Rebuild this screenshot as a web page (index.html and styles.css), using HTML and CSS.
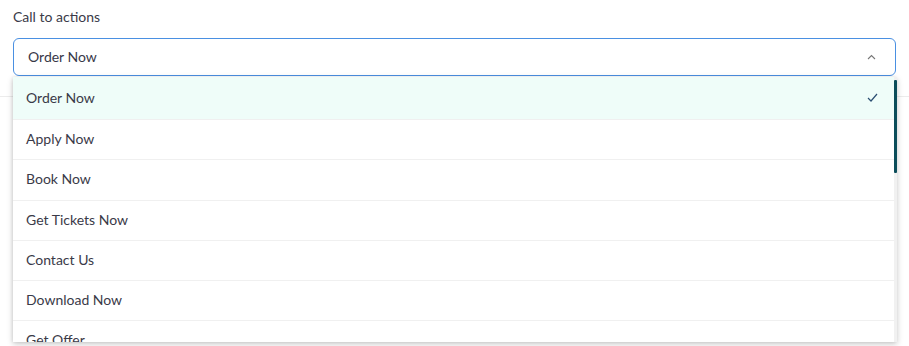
FILE: index.html
```html
<!DOCTYPE html>
<html>
<head>
<meta charset="utf-8">
<link rel="stylesheet" href="styles.css">
</head>
<body>
<div class="page">
  <div class="field">
    <div class="label">Call to actions</div>
    <div class="select">
      <span class="value">Order Now</span>
      <svg class="chev" width="9" height="6" viewBox="0 0 9 6"><path d="M1 5 L4.5 1.5 L8 5" fill="none" stroke="#777" stroke-width="1.1"/></svg>
    </div>
    <div class="menu">
      <div class="list">
        <div class="opt sel"><span>Order Now</span><svg class="check" width="11" height="9" viewBox="0 0 11 9"><path d="M1 5 L4 8 L10 1" fill="none" stroke="#2c4f73" stroke-width="1.2"/></svg></div>
        <div class="opt"><span>Apply Now</span></div>
        <div class="opt"><span>Book Now</span></div>
        <div class="opt"><span>Get Tickets Now</span></div>
        <div class="opt"><span>Contact Us</span></div>
        <div class="opt"><span>Download Now</span></div>
        <div class="opt"><span>Get Offer</span></div>
      </div>
      <div class="track"><div class="thumb"></div></div>
    </div>
  </div>
  <div class="divider"></div>
</div>
</body>
</html>
```
FILE: styles.css
```css
html, body { margin: 0; padding: 0; background: #fff; }
body {
  font-family: "Lato", "Noto Sans", sans-serif;
  color: #383848;
  width: 909px;
  height: 346px;
  overflow: hidden;
}
.page { padding: 8px 13px 0 13px; }
.field { position: relative; }
.label { font-size: 14px; line-height: 17px; height: 17px; margin-bottom: 13px; color: #3a3a48; }
.select {
  box-sizing: border-box;
  height: 38px;
  border: 1px solid #4a90e2;
  border-radius: 6px;
  display: flex;
  align-items: center;
  justify-content: space-between;
  padding: 0 19px 1px 14px;
  font-size: 14px;
}
.chev { display: block; }
.divider { height: 1px; background: #ececec; margin: 20px -13px 0 -13px; }
.menu {
  position: absolute;
  left: 0;
  top: 69px;
  width: 884px;
  height: 265px;
  background: #fff;
  display: flex;
  overflow: hidden;
  box-shadow: 0 2px 6px rgba(0,0,0,0.22), -1px 0 3px rgba(0,0,0,0.06);
  z-index: 2;
}
.list { flex: 1; }
.opt {
  box-sizing: border-box;
  height: 40.25px;
  border-bottom: 1px solid #f0f0f0;
  display: flex;
  align-items: center;
  justify-content: space-between;
  padding: 0 16px 2px 13px;
  font-size: 14px;
  color: #3a3a48;
}
.opt.sel { height: 43px; background: #effdf9; padding-top: 0; padding-bottom: 1px; }
.check { display: block; }
.track { width: 3px; background: #f1f1f1; padding-top: 3px; }
.thumb { height: 93px; background: #0b4d5a; border-radius: 1px; }
```
